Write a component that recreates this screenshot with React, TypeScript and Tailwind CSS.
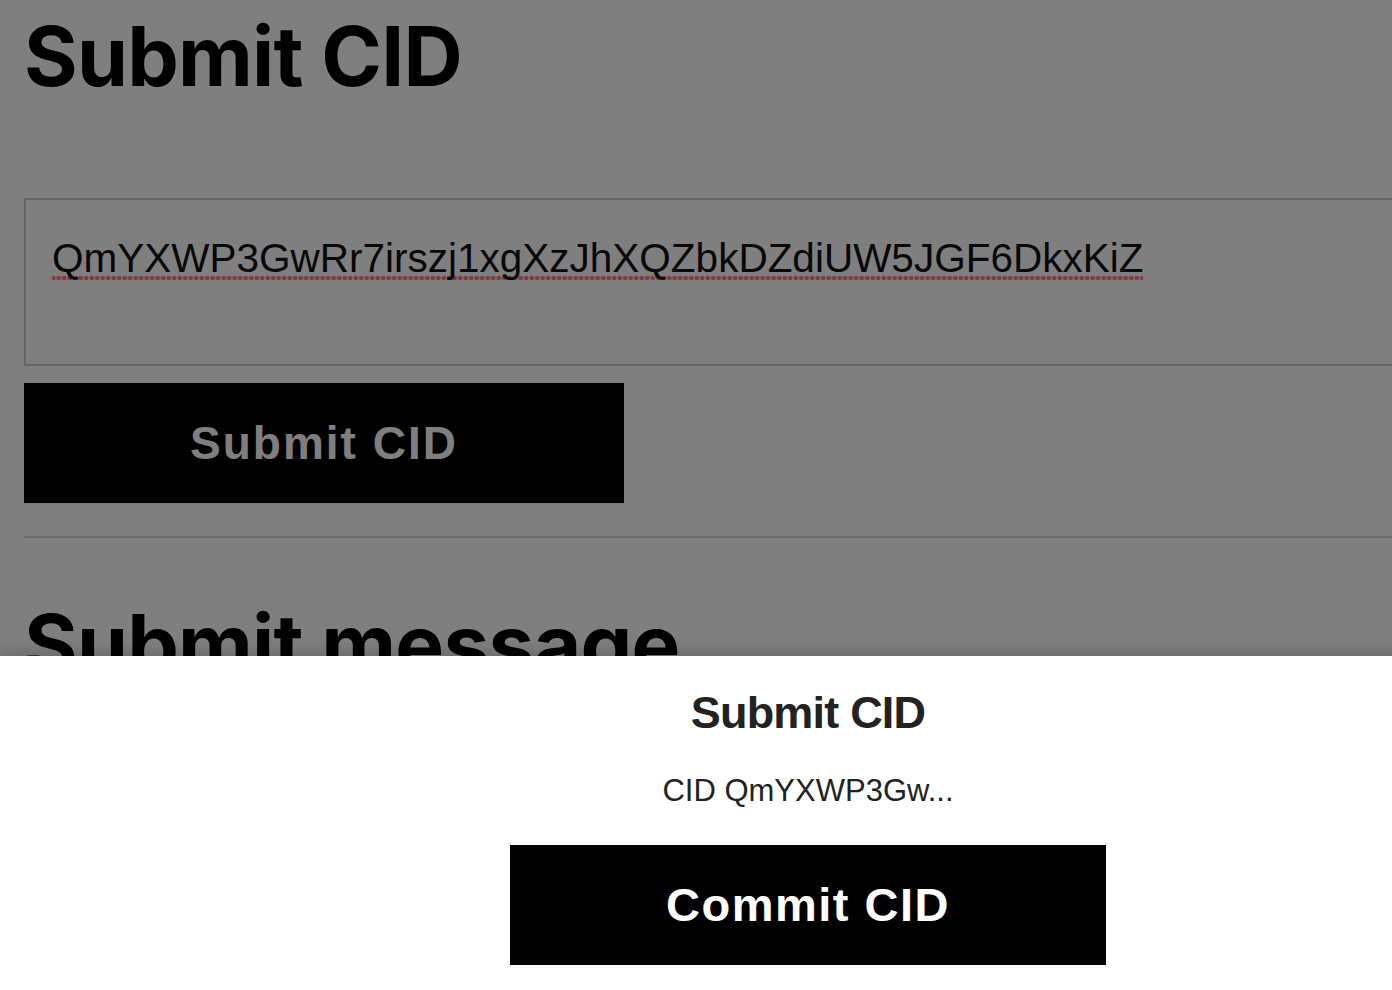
const cid = 'QmYXWP3GwRr7irszj1xgXzJhXQZbkDZdiUW5JGF6DkxKiZ';

const App = () => {
  return (
    <div className="relative h-[990px] w-full overflow-hidden bg-white">
      <div className="w-[1616px] px-6">
        <h1 className="mt-4 text-[82px] font-bold leading-none tracking-[-0.8px] text-black [font-family:Inter,sans-serif]">
          Submit CID
        </h1>

        <div className="mt-[100px] h-[168px] border-2 border-[#cccccc] px-[26px] pt-[38px] [font-family:'Liberation_Sans',Arial,sans-serif]">
          {/* spellcheck-style dotted underline */}
          <span className="bg-[radial-gradient(circle,#ff7a7a_2.1px,transparent_2.6px)] bg-[length:5.5px_6px] bg-bottom bg-repeat-x text-[40.5px] leading-none text-[#111]">
            {cid}
          </span>
        </div>

        <button
          type="button"
          className="mt-[17px] flex h-[120px] w-[600px] items-center justify-center bg-black text-[46px] font-bold tracking-[2px] text-white [font-family:'Liberation_Sans',Arial,sans-serif]"
        >
          Submit CID
        </button>

        <hr className="mt-[33px] border-t-2 border-[#d6d6d6]" />

        <h1 className="mt-[66px] text-[82px] font-bold leading-none tracking-[-0.8px] text-black [font-family:Inter,sans-serif]">
          Submit message
        </h1>
      </div>

      {/* dimmed backdrop */}
      <div className="absolute inset-0 bg-black/50" />

      {/* bottom sheet */}
      <div className="absolute bottom-0 left-0 flex h-[334px] w-[1616px] flex-col items-center bg-white pt-[34px] shadow-[0_-4px_14px_rgba(0,0,0,0.18)] [font-family:'Liberation_Sans',Arial,sans-serif]">
        <h2 className="text-[45px] font-bold leading-none tracking-[-0.8px] text-[#222]">Submit CID</h2>
        <p className="mt-[40px] text-[31px] leading-none text-[#222]">CID {cid.slice(0, 9)}...</p>
        <button
          type="button"
          className="mt-[39px] flex h-[120px] w-[596px] items-center justify-center bg-black text-[47px] font-bold tracking-[1.5px] text-white"
        >
          Commit CID
        </button>
      </div>
    </div>
  );
};

export default App;
